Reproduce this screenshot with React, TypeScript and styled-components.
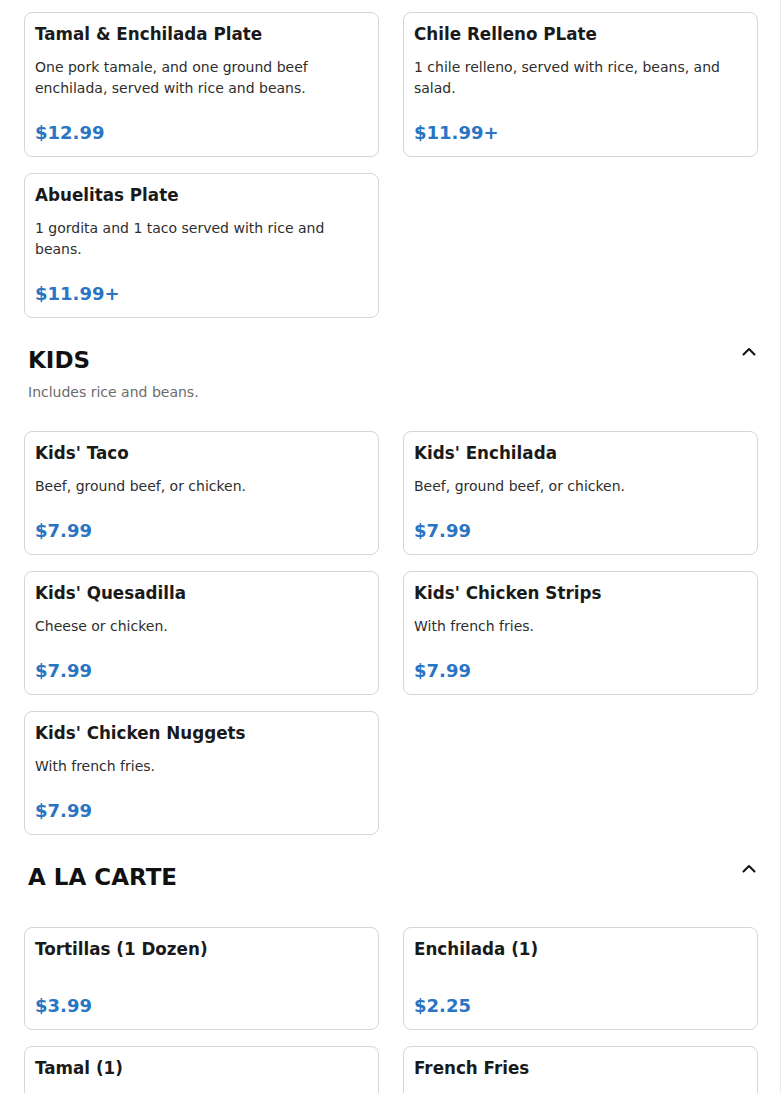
import React from "react";
import styled, { createGlobalStyle } from "styled-components";

const Global = createGlobalStyle`
  html, body {
    margin: 0;
    padding: 0;
    background: #ffffff;
    font-family: "DejaVu Sans", Verdana, sans-serif;
  }
  body {
    background: linear-gradient(to left, #ffffff 1px, #ececec 1px, #ececec 2px, #ffffff 2px);
  }
  * { box-sizing: border-box; }
`;

const Page = styled.div`
  padding: 12px 24px 24px 24px;
  display: flex;
  flex-direction: column;
`;

const Grid = styled.div`
  display: grid;
  grid-template-columns: 1fr 1fr;
  column-gap: 24px;
  row-gap: 16px;
`;

const Card = styled.div`
  border: 1px solid #d6d6d6;
  border-radius: 8px;
  background: #fff;
  padding: 11px 11px 10px 10px;
  display: flex;
  flex-direction: column;
`;

const ItemTitle = styled.div`
  font-size: 16.75px;
  line-height: 20px;
  font-weight: 700;
  color: #1a1a1a;
`;

const ItemDesc = styled.div`
  font-size: 14px;
  line-height: 21px;
  color: #2e2e2e;
  margin-top: 13px;
  padding-right: 20px;
`;

const Price = styled.div`
  font-size: 18px;
  line-height: 27px;
  font-weight: 700;
  color: #2a74c4;
  margin-top: 20px;
`;

const SectionHeader = styled.div`
  display: flex;
  justify-content: space-between;
  align-items: flex-start;
  margin-top: 27px;
  margin-bottom: 28px;
`;

const HeaderText = styled.div`
  padding-left: 4px;
  display: flex;
  flex-direction: column;
`;

const SectionTitle = styled.div`
  font-size: 23px;
  line-height: 30px;
  font-weight: 700;
  color: #111;
`;

const SectionSub = styled.div`
  font-size: 14px;
  line-height: 21px;
  color: #6c6c6c;
  margin-top: 7px;
`;

const Toggle = styled.button`
  border: none;
  background: transparent;
  padding: 0;
  margin: 2px 2px 0 0;
  width: 14px;
  height: 9px;
  display: flex;
  cursor: pointer;
`;

type Item = { name: string; desc?: string; price: string };

const plates: Item[] = [
  { name: "Tamal & Enchilada Plate", desc: "One pork tamale, and one ground beef enchilada, served with rice and beans.", price: "$12.99" },
  { name: "Chile Relleno PLate", desc: "1 chile relleno, served with rice, beans, and salad.", price: "$11.99+" },
  { name: "Abuelitas Plate", desc: "1 gordita and 1 taco served with rice and beans.", price: "$11.99+" },
];

const kids: Item[] = [
  { name: "Kids' Taco", desc: "Beef, ground beef, or chicken.", price: "$7.99" },
  { name: "Kids' Enchilada", desc: "Beef, ground beef, or chicken.", price: "$7.99" },
  { name: "Kids' Quesadilla", desc: "Cheese or chicken.", price: "$7.99" },
  { name: "Kids' Chicken Strips", desc: "With french fries.", price: "$7.99" },
  { name: "Kids' Chicken Nuggets", desc: "With french fries.", price: "$7.99" },
];

const carte: Item[] = [
  { name: "Tortillas (1 Dozen)", price: "$3.99" },
  { name: "Enchilada (1)", price: "$2.25" },
  { name: "Tamal (1)", price: "$2.25" },
  { name: "French Fries", price: "$2.99" },
];

const Chevron = () => (
  <svg width="14" height="9" viewBox="0 0 14 9" fill="none">
    <polyline points="1.5,7.5 7,2 12.5,7.5" stroke="#111" strokeWidth="2" strokeLinecap="round" strokeLinejoin="round" />
  </svg>
);

const ItemCard = ({ item }: { item: Item }) => (
  <Card>
    <ItemTitle>{item.name}</ItemTitle>
    <ItemDesc>{item.desc ?? ""}</ItemDesc>
    <Price>{item.price}</Price>
  </Card>
);

const Section = ({ title, sub, items }: { title: string; sub?: string; items: Item[] }) => (
  <>
    <SectionHeader>
      <HeaderText>
        <SectionTitle>{title}</SectionTitle>
        <SectionSub>{sub ?? ""}</SectionSub>
      </HeaderText>
      <Toggle aria-label="Collapse">
        <Chevron />
      </Toggle>
    </SectionHeader>
    <Grid>
      {items.map((it) => (
        <ItemCard key={it.name} item={it} />
      ))}
    </Grid>
  </>
);

export default function App() {
  return (
    <>
      <Global />
      <Page>
        <Grid>
          {plates.map((it) => (
            <ItemCard key={it.name} item={it} />
          ))}
        </Grid>
        <Section title="KIDS" sub="Includes rice and beans." items={kids} />
        <Section title="A LA CARTE" items={carte} />
      </Page>
    </>
  );
}
